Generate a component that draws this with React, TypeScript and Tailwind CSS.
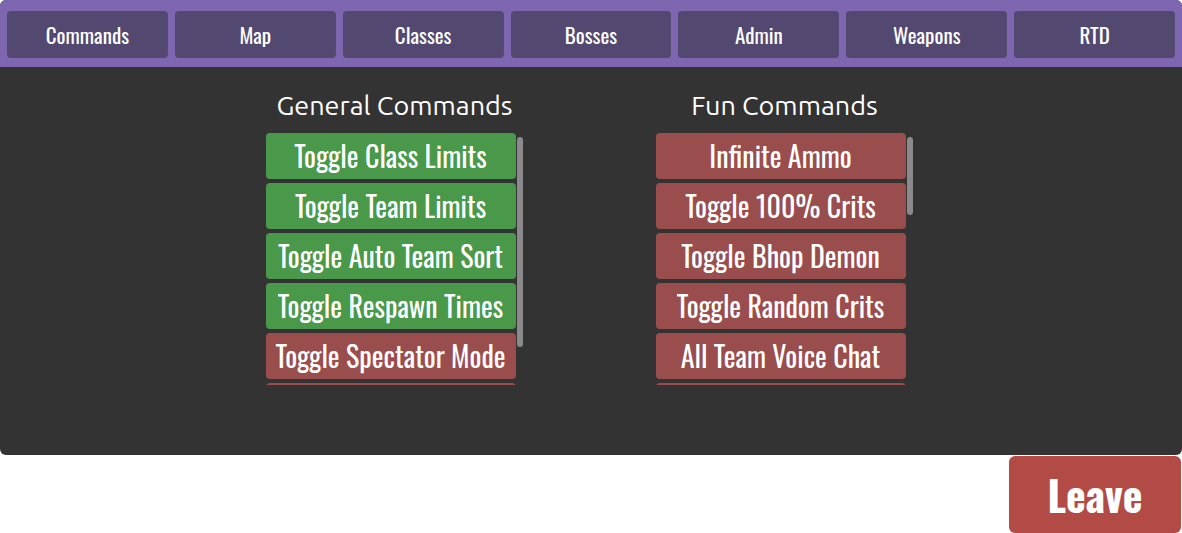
import React from "react";

const tabs = ["Commands", "Map", "Classes", "Bosses", "Admin", "Weapons", "RTD"];

type Item = { label: string; on: boolean };

const general: Item[] = [
  { label: "Toggle Class Limits", on: true },
  { label: "Toggle Team Limits", on: true },
  { label: "Toggle Auto Team Sort", on: true },
  { label: "Toggle Respawn Times", on: true },
  { label: "Toggle Spectator Mode", on: false },
  { label: "Toggle Friendly Fire", on: false },
];

const fun: Item[] = [
  { label: "Infinite Ammo", on: false },
  { label: "Toggle 100% Crits", on: false },
  { label: "Toggle Bhop Demon", on: false },
  { label: "Toggle Random Crits", on: false },
  { label: "All Team Voice Chat", on: false },
  { label: "Toggle Low Gravity", on: false },
];

const cond = { fontFamily: '"Oswald", "Roboto Condensed", sans-serif' };

function Column({ title, items, thumbTop, thumbHeight }: { title: string; items: Item[]; thumbTop: number; thumbHeight: number }) {
  return (
    <div className="flex w-[258px] flex-col items-center">
      <h2
        className="h-[66px] whitespace-nowrap pt-[20px] text-[27px] leading-[36px] text-white"
        style={{ fontFamily: '"Ubuntu", "Open Sans", sans-serif' }}
      >
        {title}
      </h2>
      <div className="relative flex h-[252px] w-[258px] overflow-hidden">
        <div className="flex w-[250px] flex-col gap-[4px]">
          {items.map((it) => (
            <div
              key={it.label}
              className={`flex h-[46px] shrink-0 items-center justify-center whitespace-nowrap rounded-[4px] text-[28px] leading-none text-white ${it.on ? "bg-[#4a984a]" : "bg-[#994d4d]"}`}
              style={cond}
            >
              {it.label}
            </div>
          ))}
        </div>
        <div className="absolute left-[251px] w-[6px] rounded-full bg-[#8a8a8a]" style={{ top: thumbTop, height: thumbHeight }} />
      </div>
    </div>
  );
}

export default function App() {
  return (
    <div className="w-[1182px] h-[533px] bg-white">
      <div className="flex h-[455px] flex-col overflow-hidden rounded-[6px] bg-[#333333]">
        <div className="flex h-[67px] gap-[7px] bg-[#7e66b0] px-[7px] pt-[11px] pb-[9px]">
          {tabs.map((t) => (
            <div
              key={t}
              className="flex flex-1 items-center justify-center whitespace-nowrap rounded-[4px] bg-[#524870] text-[21px] text-white"
              style={cond}
            >
              {t}
            </div>
          ))}
        </div>
        <div className="flex justify-center gap-[132px] pr-[3px]">
          <Column title="General Commands" items={general} thumbTop={4} thumbHeight={210} />
          <Column title="Fun Commands" items={fun} thumbTop={4} thumbHeight={78} />
        </div>
      </div>
      <div className="flex justify-end pr-[1px] pt-[1px]">
        <div
          className="flex h-[77px] w-[172px] items-center justify-center rounded-[6px] bg-[#b24b45] text-[42px] font-bold text-white"
          style={cond}
        >
          Leave
        </div>
      </div>
    </div>
  );
}
